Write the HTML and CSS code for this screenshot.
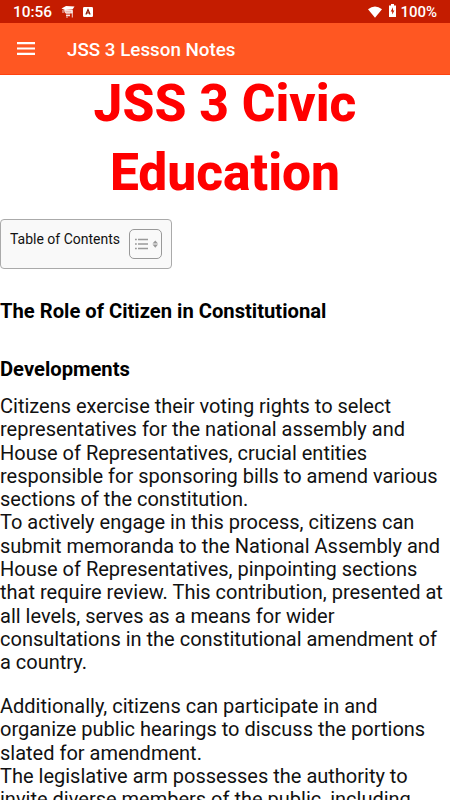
FILE: index.html
```html
<!DOCTYPE html>
<html lang="en">
<head>
    <meta charset="UTF-8">
    <meta name="viewport" content="width=device-width, initial-scale=1.0">
    <title>JSS 3 Lesson Notes</title>
    <link rel="stylesheet" href="styles.css">
</head>
<body>

    <!-- Status bar -->
    <div class="status-bar">
        <span class="time">10:56</span>
        <svg class="cap-icon" width="14" height="14" viewBox="0 0 14 14">
            <path d="M0.5 3.5 L5 1 L13.5 1.5 L11.5 4.5 L4 5 Z" fill="#fff"/>
            <path d="M3.5 5.5 H11 V8 H4.5 Z M2 5 V8 M6 8 V13 M8 8 V11.5 M11.3 5 V12.5 M5 10.5 H9" fill="#fff" fill-opacity="0.7" stroke="#fff" stroke-opacity="0.8"/>
        </svg>
        <svg class="key-icon" width="10" height="10" viewBox="0 0 10 10">
            <rect width="10" height="10" rx="1.2" fill="#fff"/>
            <path d="M2.9 7.6 L5 2.6 L7.1 7.6 M3.7 6 H6.3" fill="none" stroke="#8a1400" stroke-width="1.2"/>
        </svg>
        <svg class="wifi-icon" width="14" height="12" viewBox="0 0 14 12">
            <path d="M0 3.2 Q7 -2.4 14 3.2 L7 11.8 Z" fill="#fff"/>
        </svg>
        <svg class="battery-icon" width="7" height="13" viewBox="0 0 7 13">
            <path d="M2 0 H5 V1.4 H7 V13 H0 V1.4 H2 Z" fill="#fff"/>
            <path d="M4 3.2 L1.7 7.5 H3.2 V10.6 L5.4 6.4 H4 Z" fill="#c41c00"/>
        </svg>
        <span class="percent">100%</span>
    </div>

    <!-- App bar -->
    <div class="app-bar">
        <svg class="menu-icon" width="18" height="13" viewBox="0 0 18 13">
            <path d="M0 1.2 H18 M0 6.5 H18 M0 11.8 H18" stroke="#fff" stroke-width="2.2"/>
        </svg>
        <span class="app-title">JSS 3 Lesson Notes</span>
    </div>

    <!-- Lesson -->
    <div class="content">
        <h1>JSS 3 Civic<br>Education</h1>

        <div class="toc">
            <span class="toc-title">Table of Contents</span>
            <span class="toc-toggle">
                <svg width="31" height="28" viewBox="0 0 31 28">
                    <path d="M5 9.5 H6.8 M5 14 H6.8 M5 18.5 H6.8 M8 9.5 H18 M8 14 H18 M8 18.5 H18" stroke="#999" stroke-width="1.3"/>
                    <path d="M22.5 13.6 L25.3 10.4 L28 13.6 Z M22.5 14.6 L25.3 17.8 L28 14.6 Z" fill="#999"/>
                </svg>
            </span>
        </div>

        <h2>The Role of Citizen in Constitutional<br>Developments</h2>

        <p>Citizens exercise their voting rights to select<br>
        representatives for the national assembly and<br>
        House of Representatives, crucial entities<br>
        responsible for sponsoring bills to amend various<br>
        sections of the constitution.<br>
        To actively engage in this process, citizens can<br>
        submit memoranda to the National Assembly and<br>
        House of Representatives, pinpointing sections<br>
        that require review. This contribution, presented at<br>
        all levels, serves as a means for wider<br>
        consultations in the constitutional amendment of<br>
        a country.</p>

        <p>Additionally, citizens can participate in and<br>
        organize public hearings to discuss the portions<br>
        slated for amendment.<br>
        The legislative arm possesses the authority to<br>
        invite diverse members of the public, including</p>
    </div>

</body>
</html>
```

FILE: styles.css
```css
body {
    font-family: Roboto, sans-serif;
    background-color: #fff;
    color: #111;
    margin: 0;
    height: 800px;
    overflow: hidden;
}
.status-bar {
    display: flex;
    align-items: center;
    height: 23px;
    padding: 0 13px;
    background-color: #c41c00;
    color: #fff;
    font-size: 15px;
    font-weight: 500;
}
.time {
    font-size: 15.4px;
}
.cap-icon {
    margin-left: 9px;
}
.key-icon {
    margin-left: 8px;
}
.wifi-icon {
    margin-left: auto;
}
.battery-icon {
    margin: -2px 4px 0 7px;
}
.app-bar {
    display: flex;
    align-items: center;
    box-sizing: border-box;
    height: 52px;
    padding: 0 17px;
    border-bottom: 1px solid #ff4310;
    background-color: #ff5722;
    color: #fff;
}
.menu-icon {
    margin: -1px 32px 0 0;
}
.app-title {
    padding-top: 2px;
    font-size: 18.8px;
    font-weight: 500;
}
h1 {
    margin: -6px 0 12px;
    color: #f00;
    font-size: 51.5px;
    font-weight: 800;
    line-height: 69px;
    text-align: center;
}
.toc {
    display: flex;
    box-sizing: border-box;
    width: 172px;
    height: 50px;
    padding: 9px;
    border: 1px solid #aaa;
    border-radius: 4px;
    background-color: #f9f9f9;
    font-size: 14px;
    white-space: nowrap;
}
.toc-title {
    line-height: 20px;
}
.toc-toggle {
    margin-left: auto;
}
.toc-toggle svg {
    display: block;
    border: 1px solid #999;
    border-radius: 5px;
}
h2 {
    margin: 13px 0 -3px;
    color: #000;
    font-size: 20.2px;
    line-height: 58px;
}
p {
    margin: 0 0 20.5px;
    font-size: 20px;
    line-height: 23.3px;
    white-space: nowrap;
}
```
